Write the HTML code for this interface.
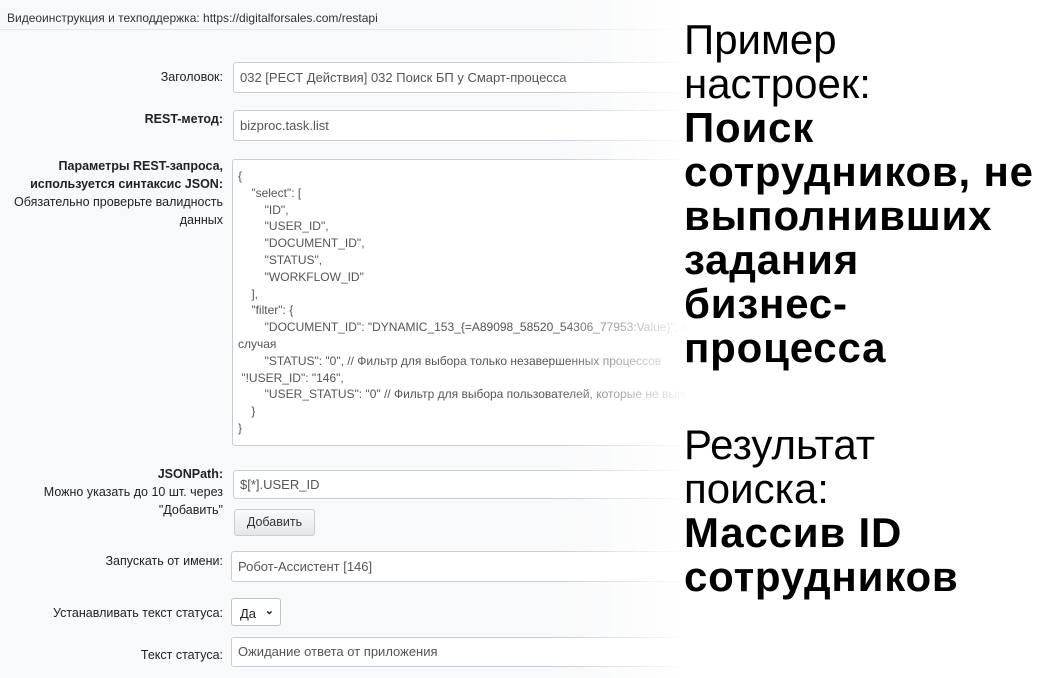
<!DOCTYPE html>
<html><head><meta charset="utf-8">
<style>
*{box-sizing:border-box;margin:0;padding:0}
body{width:1062px;height:678px;overflow:hidden;background:#f8f9fa;font-family:"Liberation Sans","Noto Sans CJK SC",sans-serif;color:#333;position:relative}
.top{position:absolute;left:0;top:0;width:1062px;height:30px;border-bottom:1px solid #e3e6ea;font-size:12px;padding:11px 0 0 7px;color:#333}
.lab{position:absolute;right:839px;font-size:12.5px;text-align:right;line-height:18px;color:#222}
.in{position:absolute;left:233px;width:480px;background:#fff;border:1px solid #c8cdd3;border-radius:3px;font-size:13px;color:#555;padding-left:6px}
.ta{font-size:12px;line-height:16.8px;color:#555;padding:8px 5px;white-space:pre}
.btn{position:absolute;left:234px;top:509px;width:81px;height:27px;border:1px solid #c9ced3;border-radius:3px;background:linear-gradient(#f9fafb,#e4e7ea);font-size:12.5px;color:#333;text-align:center;line-height:25px}
.sel{position:absolute;left:231px;top:598px;width:50px;height:28px;background:#fff;border:1px solid #bfc4ca;border-radius:3px;font-size:13px;padding:7px 0 0 8px;color:#222}
.fade{position:absolute;left:555px;top:0;width:135px;height:678px;background:linear-gradient(90deg,rgba(255,255,255,0),#fff)}
.white{position:absolute;left:690px;top:0;width:372px;height:678px;background:#fff}
.big{position:absolute;left:684px;top:18px;font-size:42px;line-height:44px;color:#000;white-space:nowrap}
.big b{font-weight:bold;letter-spacing:0.8px}
</style></head><body>
<div class="top">Видеоинструкция и техподдержка: https://digitalforsales.com/restapi</div>

<div class="lab" style="top:68px">Заголовок:</div>
<div class="in" style="top:62px;height:31px;line-height:29px">032 [РЕСТ Действия] 032 Поиск БП у Смарт-процесса</div>

<div class="lab" style="top:110px;font-weight:bold">REST-метод:</div>
<div class="in" style="top:110px;height:31px;line-height:29px">bizproc.task.list</div>

<div class="lab" style="top:157px"><b>Параметры REST-запроса,<br>используется синтаксис JSON:</b><br>Обязательно проверьте валидность<br>данных</div>
<div class="in ta" style="top:159px;height:287px;left:232px">{
    "select": [
        "ID",
        "USER_ID",
        "DOCUMENT_ID",
        "STATUS",
        "WORKFLOW_ID"
    ],
    "filter": {
        "DOCUMENT_ID": "DYNAMIC_153_{=A89098_58520_54306_77953:Value}", //
случая
        "STATUS": "0", // Фильтр для выбора только незавершенных процессов
 "!USER_ID": "146",
        "USER_STATUS": "0" // Фильтр для выбора пользователей, которые не выполнили задание
    }
}</div>

<div class="lab" style="top:465px"><b>JSONPath:</b><br>Можно указать до 10 шт. через<br>"Добавить"</div>
<div class="in" style="top:470px;height:29px;line-height:27px">$[*].USER_ID</div>
<div class="btn">Добавить</div>

<div class="lab" style="top:552px">Запускать от имени:</div>
<div class="in" style="top:551px;height:31px;line-height:29px;left:231px">Робот-Ассистент [146]</div>

<div class="lab" style="top:604px">Устанавливать текст статуса:</div>
<div class="sel">Да <span style="position:absolute;right:6px;top:5px;font-size:11px;font-weight:bold">&#8964;</span></div>

<div class="lab" style="top:646px">Текст статуса:</div>
<div class="in" style="top:637px;height:30px;line-height:28px;left:231px">Ожидание ответа от приложения</div>

<div class="fade"></div>
<div class="white"></div>
<div class="big">Пример<br>настроек:<br><b>Поиск<br>сотрудников, не<br>выполнивших<br>задания<br>бизнес-<br>процесса</b><div style="height:53px"></div>Результат<br>поиска:<br><b>Массив ID<br>сотрудников</b></div>
</body></html>
